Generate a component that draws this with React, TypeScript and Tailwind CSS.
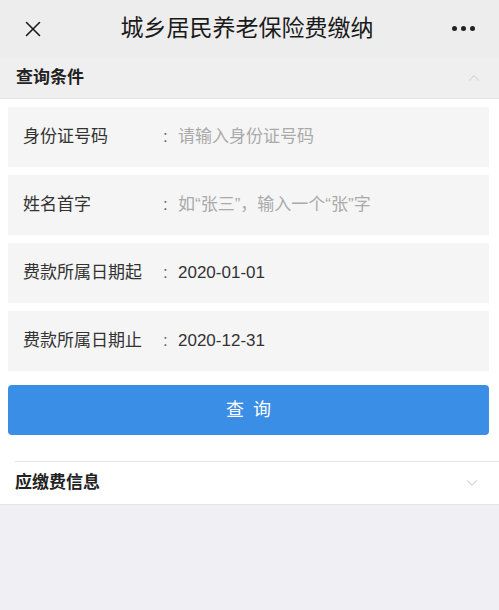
import { X, ChevronUp, ChevronDown } from 'lucide-react'

const FONT = { fontFamily: '"Liberation Sans", "Noto Sans CJK SC", sans-serif' }

const rows = [
  { label: '身份证号码', value: '请输入身份证号码', placeholder: true },
  { label: '姓名首字', value: '如“张三”，输入一个“张”字', placeholder: true },
  { label: '费款所属日期起', value: '2020-01-01', placeholder: false },
  { label: '费款所属日期止', value: '2020-12-31', placeholder: false },
]

export default function App() {
  return (
    <div className="w-[499px] h-[610px] bg-[#efeff4] flex flex-col" style={FONT}>
      <header className="h-[57px] bg-[#ededed] flex items-center px-[20px]">
        <X className="w-[26px] h-[26px] text-[#1a1a1a]" strokeWidth={1.5} />
        <h1 className="flex-1 text-center text-[23px] text-[#1a1a1a] pr-[4px]">城乡居民养老保险费缴纳</h1>
        <div className="flex gap-[4px] items-center pr-[4px]">
          <span className="w-[5px] h-[5px] rounded-full bg-[#222]" />
          <span className="w-[5px] h-[5px] rounded-full bg-[#222]" />
          <span className="w-[5px] h-[5px] rounded-full bg-[#222]" />
        </div>
      </header>

      <div className="h-[42px] bg-[#efefef] flex items-center justify-between px-[16px] border-b border-[#e2e2e2]">
        <span className="text-[17px] font-bold text-[#222]">查询条件</span>
        <ChevronUp className="w-[18px] h-[18px] text-[#d8d8d8]" strokeWidth={1.5} />
      </div>

      <div className="bg-white pl-[8px] pr-[10px] pt-[8px] pb-[26px] flex flex-col gap-[8px]">
        {rows.map((r) => (
          <div key={r.label} className="h-[60px] bg-[#f5f5f5] flex items-center pl-[15px] text-[17px]">
            <span className="w-[140px] text-[#333]">{r.label}</span>
            <span className="w-[15px] text-[#666]">:</span>
            <span className={r.placeholder ? 'text-[#aaa]' : 'text-[#333]'}>{r.value}</span>
          </div>
        ))}
        <button className="mt-[6px] h-[50px] rounded-[4px] bg-[#3a8ee6] text-white text-[18px] tracking-[9px] pl-[9px]">
          查询
        </button>
      </div>

      <div className="bg-white pl-[15px]">
        <div className="h-[43px] flex items-center justify-between pr-[18px] border-t border-[#e4e4e4]">
          <span className="text-[17px] font-bold text-[#222]">应缴费信息</span>
          <ChevronDown className="w-[18px] h-[18px] text-[#d8d8d8]" strokeWidth={1.5} />
        </div>
      </div>
      <div className="h-[1px] bg-[#e4e4e4]" />
    </div>
  )
}
